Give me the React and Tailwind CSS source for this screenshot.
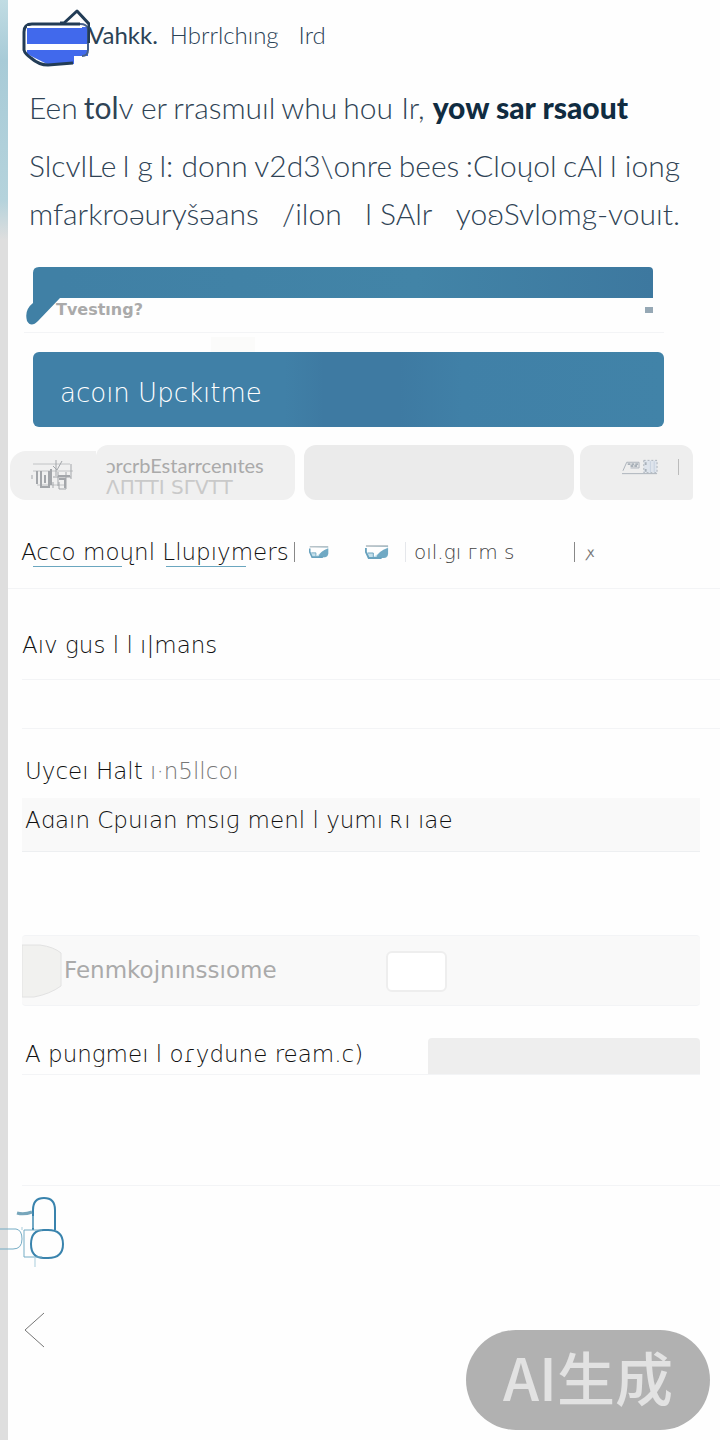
import React from "react";

const Logo = () => (
  <svg className="w-17 h-15 shrink-0" viewBox="0 0 68 60" fill="none">
    <path d="M5 18H66V47H52V55H25L5 45Z" fill="#4169ec" />
    <path d="M4 35H65V41H4Z" fill="#fff" />
    <path d="M58 15Q65 15 66 20V41Q66 47 60 47" stroke="#45608a" strokeWidth="2" />
    <path d="M38 14L42 14L55 2L67 15L67 34" stroke="#223c56" strokeWidth="3" strokeLinejoin="round" />
    <path d="M58 15H10Q2 15 2 23V41Q3 45 9 49Q17 56 26 56L51 54" stroke="#223c56" strokeWidth="3" />
    <path d="M5 18H60" stroke="#fff" strokeWidth="2" />
  </svg>
);

const SketchIcon = () => (
  <svg className="w-11 h-9 shrink-0" viewBox="0 0 44 36" fill="none" stroke="#a3a6aa">
    <path d="M2 6H39M2 13H42M6 27H33" strokeWidth="1" opacity=".6" />
    <path d="M6 13V26M10 13V29H18V13M14 17V25M20 11V27" strokeWidth="2" />
    <path d="M25 2V18M22 8L26 12L31 3M22 19H40M27 14V28M40 6V21M35 14V31H28V24" strokeWidth="1" />
    <path d="M27 18H39M28 21H34V30" strokeWidth="2" />
    <path d="M1 17V21M22 24V30" strokeWidth="1" />
  </svg>
);

const TinyChart = ({ className }) => (
  <svg className={className} viewBox="0 0 26 14" preserveAspectRatio="none" fill="none">
    <path d="M1 1H25V9Q25 13 21 13H3V8H9V12L25 2" fill="#c5e0eb" />
    <path d="M12 13Q14 6 25 3V9Q24 13 20 13Z" fill="#70a9c4" />
    <path d="M1 1H25" stroke="#81939c" />
    <path d="M1 3V7L4 13H18" stroke="#68a2be" strokeWidth="2" />
    <path d="M3 8H9V12" stroke="#68a2be" />
  </svg>
);

const FlagIcon = () => (
  <svg className="w-9 h-4" viewBox="0 0 38 16" fill="none" stroke="#a9b1b9">
    <path d="M23 1H37V14H23Z" fill="#dee4ec" strokeDasharray="2 2" />
    <path d="M5 3H18V9H9M5 3L1 12M0 15H37" />
    <path d="M6 5H18M9 7H17M25 3V7M25 10V13" strokeWidth="2" strokeDasharray="3 1" />
    <path d="M30 2V14M34 2V14" stroke="#c6d1de" />
  </svg>
);

const LockIcon = () => (
  <svg className="relative -ml-2 w-17 h-18" viewBox="0 0 68 72" fill="none" stroke="#3983ad">
    <path d="M33 34V14Q33 2 44 2Q55 2 55 14V34" strokeWidth="2" />
    <path d="M31 48Q31 34 44 34H48Q63 34 63 48Q63 62 48 62H44Q31 62 31 48Z" strokeWidth="2" />
    <path d="M0 33H16Q22 34 22 43Q22 53 13 53H0M24 34H42M24 34V61H42" stroke="#75acc5" />
    <path d="M17 17Q24 19 32 16" stroke="#77a6bb" strokeWidth="3" />
    <path d="M22 31V34M35 62V71M33 20V32" stroke="#a9cddc" />
  </svg>
);

const App = () => {
  return (
    <div className="flex min-h-screen bg-[#fefefe] font-['Lato',sans-serif] text-[#111]">
      <aside className="w-2 shrink-0 bg-[linear-gradient(to_bottom,#c1dce3_0px,#a8cbd7_60px,#b5d3dc_200px,#dedede_240px,#dedede_100%)]" />
      <main className="flex-1 min-w-0">
        <header className="flex items-center pl-3.5 pt-0.5 h-[75px] text-[#2b4256] text-2xl">
          <Logo />
          <h1 className="flex gap-3 -ml-0.5 -mt-2">
            <span>Vahkk.</span>
            <span className="font-light">Hbrrlchıng</span>
            <span className="ml-2 font-light">Ird</span>
          </h1>
        </header>

        <section className="pl-[21px] pr-10 pt-2 text-[#2f4355] text-[30px] font-light whitespace-nowrap">
          <p className="flex gap-1.5 h-12 leading-[48px]">
            <span>Een</span>
            <span><b>tol</b>v er</span>
            <span>rrasmuıl</span>
            <span>whu</span>
            <span>hou Ir,</span>
            <span className="pl-0.5 font-black text-[#102c41]">yow sar rsaout</span>
          </p>
          <p className="flex justify-between mt-2.5 h-12 leading-[48px]">
            <span>SlcvlLe</span>
            <span>l g</span>
            <span>l: donn</span>
            <span>v2d3\onre</span>
            <span>bees</span>
            <span>:Cloųol</span>
            <span>cAl</span>
            <span>l iong</span>
          </p>
          <p className="flex justify-between h-12 leading-[48px]">
            <span>mfarkroəuryšəans</span>
            <span>/ilon</span>
            <span>l SAlr</span>
            <span>yoʚSvlomg-vouıt.</span>
          </p>
        </section>

        <section className="mt-[30px] pl-4">
          <div className="flex h-[66px] border-b border-gray-100 mr-14">
            <svg className="w-9 h-[58px] shrink-0" viewBox="0 0 36 58" fill="#4080a5">
              <path d="M9 31V6Q9 0 15 0H36V31L14 54Q7 61 3 54Q0 43 9 36Z" />
            </svg>
            <div className="flex-1 mr-[11px]">
              <div className="h-[31px] rounded-tr bg-[linear-gradient(to_right,#4080a5,#4284a7_60%,#3d789f)]" />
              <div className="flex items-center justify-between h-6 -ml-1 text-base font-bold font-['DejaVu_Sans',sans-serif] text-[#aaa]">
                <span>Tvestıng?</span>
                <span className="w-2 h-1.5 bg-[#96a8b5]" />
              </div>
            </div>
          </div>
          <div className="ml-[187px] mt-1 w-11 h-[15px] bg-[#fbfbfa]" />
          <button className="block ml-[9px] w-[calc(100%-65px)] h-[75px] pl-[27px] pt-2 rounded-md bg-[linear-gradient(to_right,#4080a7_0%,#4080a7_40%,#3e7aa2_46%,#3e7aa2_58%,#4080a7_68%,#4183a8_100%)] text-left text-[26px] font-extralight font-['DejaVu_Sans',sans-serif] text-white">
            acoın Upckıtme
          </button>
        </section>

        <nav className="flex mt-[18px] pl-0.5 pr-[27px] h-[55px]">
          <button className="flex items-end w-[285px] text-left">
            <span className="flex items-center justify-center w-[86px] h-[49px] rounded-l-2xl bg-[#f0f0f0]">
              <SketchIcon />
            </span>
            <span className="flex-1 h-full pl-2.5 pt-2 rounded-r-xl rounded-tl-xl bg-[#f0f0f0] text-[#aaa] whitespace-nowrap">
              <span className="block text-xl leading-6">ɔrcrbEstarrcenıtes</span>
              <span className="block text-xl leading-5 font-['DejaVu_Sans',sans-serif] text-[#c9c9c9]">ΛПTTI SΓVTT</span>
            </span>
          </button>
          <button aria-label="Centre" className="flex-1 ml-[9px] rounded-xl bg-[#ebebeb]" />
          <button aria-label="Flag" className="flex items-start justify-end gap-5 w-[113px] ml-1.5 pt-3.5 pr-3.5 rounded-xl rounded-br-sm bg-[#eeeeee]">
            <FlagIcon />
            <span className="w-px h-4 bg-[#bbb]" />
          </button>
        </nav>

        <div className="flex items-center h-[89px] pl-[13px] pt-4 border-b border-gray-100 text-[23px] font-extralight font-['DejaVu_Sans',sans-serif] whitespace-nowrap">
          <a href="#account" className="flex flex-col w-[265px]">
            <span className="leading-7">Acco moųnl Llupıymers</span>
            <span className="flex gap-11 pl-3">
              <span className="w-[89px] h-px bg-[#6aa6bf]" />
              <span className="w-20 h-px bg-[#6aa6bf]" />
            </span>
          </a>
          <span className="w-px h-5 ml-2 bg-[#888]" />
          <TinyChart className="w-5 h-3 ml-3.5" />
          <TinyChart className="w-6 h-3.5 ml-9" />
          <span className="w-px h-5 ml-4 bg-gray-200" />
          <span className="ml-2 w-40 text-xl text-[#444]">oıl.gı ᴦm s</span>
          <span className="w-px h-5 bg-[#888]" />
          <span className="ml-3 text-sm text-[#777]">ꭗ</span>
        </div>

        <div className="ml-3.5 h-[91px] pt-10 border-b border-gray-100 text-[23px] font-extralight font-['DejaVu_Sans',sans-serif] leading-8">
          Aıv gus l l ı|mans
        </div>
        <div className="ml-3.5 h-[49px] border-b border-gray-100" />

        <section className="pl-3.5 pr-5 text-[23px] font-extralight font-['DejaVu_Sans',sans-serif]">
          <h2 className="h-[69px] pl-[3px] pt-[26px] leading-8">
            Uyceı Halt <span className="text-[#777]">ı·n5llcoı</span>
          </h2>
          <div className="h-[54px] pl-[3px] pt-1.5 bg-[#f9f9f9] border-b border-gray-200/60 leading-8">
            Aɑaın Cpuıan msıɡ menl l yumı ʀı ıae
          </div>

          <div className="flex items-center h-[71px] mt-[83px] rounded bg-[#f9f9f9] border-y border-gray-100">
            <svg className="w-10 h-[54px] shrink-0" viewBox="0 0 40 54">
              <path d="M0 1H18Q32 3 39 9V42Q28 50 12 53H0Z" fill="#f1f1ef" stroke="#e2e2e2" />
            </svg>
            <label htmlFor="frame" className="w-[324px] pl-0.5 font-normal text-[#aaa]">
              Fenmkojnınssıome
            </label>
            <input id="frame" className="w-[61px] h-[41px] mt-0.5 rounded-md border-2 border-[#eee] bg-white" />
          </div>

          <div className="flex items-end justify-between h-[69px] border-b border-gray-100">
            <label htmlFor="range" className="pl-[3px] pb-1 leading-8">
              A pungmeı l oɾydune ream.c)
            </label>
            <input id="range" className="w-[272px] h-9 rounded-t bg-[#eeeeee]" />
          </div>
        </section>

        <div className="ml-3.5 h-[111px] border-b border-gray-100" />

        <footer className="flex items-start justify-between">
          <div>
            <div className="pt-2.5">
              <LockIcon />
            </div>
            <button aria-label="Back" className="block mt-11 ml-4">
              <svg className="w-6 h-9" viewBox="0 0 24 36" fill="none" stroke="#777">
                <path d="M20 1L1 18L20 35" />
              </svg>
            </button>
          </div>
          <div className="flex items-center justify-center w-[244px] h-[100px] mt-36 mr-2.5 pb-2 rounded-full bg-[#b1b1b1] text-[#e2e2e2] text-[58px] font-medium font-['Noto_Sans_CJK_SC',sans-serif]">
            AI生成
          </div>
        </footer>
      </main>
    </div>
  );
};

export default App;
